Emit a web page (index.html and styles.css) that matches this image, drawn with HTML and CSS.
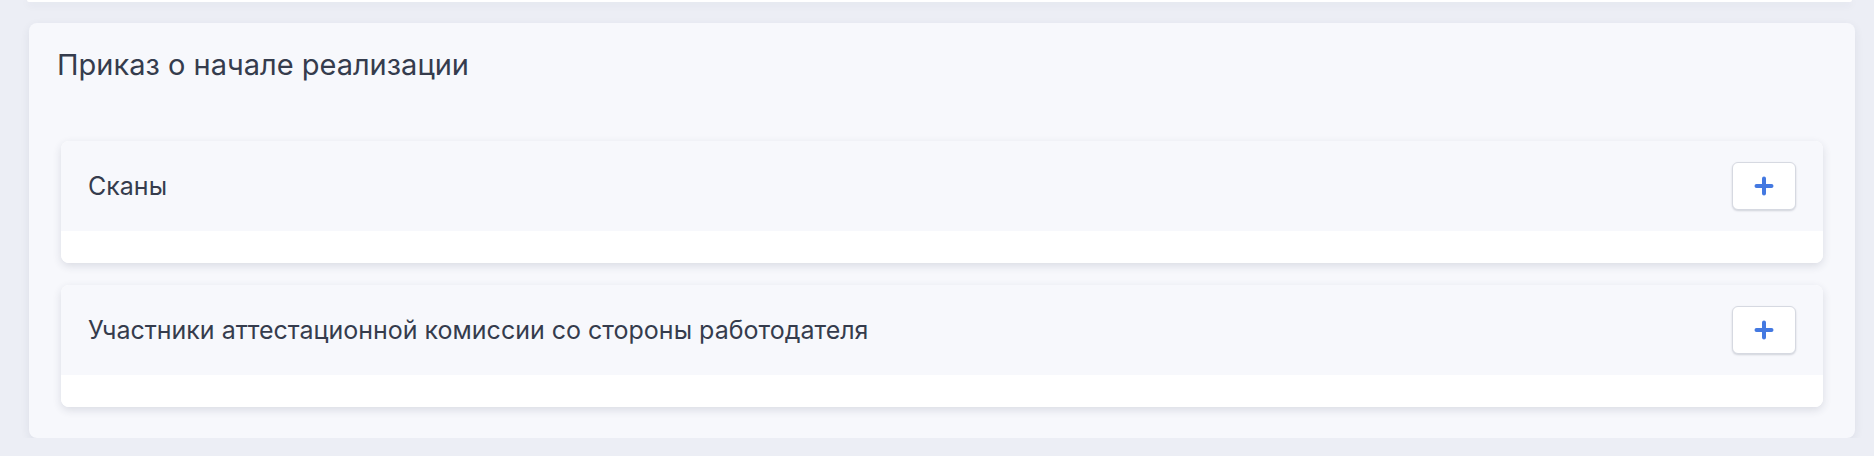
FILE: index.html
```html
<!DOCTYPE html>
<html lang="ru">
<head>
<meta charset="utf-8">
<title>Приказ о начале реализации</title>
<link rel="stylesheet" href="styles.css">
</head>
<body>
<div class="page">
  <div class="prev-card"></div>
  <section class="panel">
    <h2 class="panel-title">Приказ о начале реализации</h2>
    <div class="sections">
      <div class="sub-card">
        <div class="sub-head">
          <span class="sub-label">Сканы</span>
          <button class="add-btn" type="button" aria-label="Добавить">
            <svg width="20" height="20" viewBox="0 0 20 20"><path d="M10 2.5v15M2.5 10h15" stroke="#4479e1" stroke-width="4" stroke-linecap="round" fill="none"/></svg>
          </button>
        </div>
        <div class="sub-body"></div>
      </div>
      <div class="sub-card">
        <div class="sub-head">
          <span class="sub-label">Участники аттестационной комиссии со стороны работодателя</span>
          <button class="add-btn" type="button" aria-label="Добавить">
            <svg width="20" height="20" viewBox="0 0 20 20"><path d="M10 2.5v15M2.5 10h15" stroke="#4479e1" stroke-width="4" stroke-linecap="round" fill="none"/></svg>
          </button>
        </div>
        <div class="sub-body"></div>
      </div>
    </div>
  </section>
</div>
</body>
</html>
```
FILE: styles.css
```css
html, body {
  margin: 0;
  padding: 0;
  background: #eceef5;
  font-family: Inter, "Noto Sans", sans-serif;
  color: #353c4d;
}
.page {
  padding: 0 19px 0 29px;
}
.prev-card {
  height: 2px;
  margin: 0 3px 0 -2px;
  background: #ffffff;
  border-radius: 0 0 8px 8px;
  box-shadow: 0 2px 8px rgba(40, 50, 80, 0.12);
}
.panel {
  margin-top: 21px;
  background: #f7f8fc;
  border-radius: 8px;
  box-shadow: 0 3px 10px rgba(40, 50, 80, 0.08);
  padding: 25px 32px 31px;
}
.panel-title {
  margin: 0 0 59px -4px;
  font-size: 29px;
  line-height: 34px;
  font-weight: 400;
  color: #353c4d;
}
.sections {
  display: flex;
  flex-direction: column;
  gap: 22px;
}
.sub-card {
  background: #ffffff;
  border-radius: 8px;
  overflow: hidden;
  box-shadow: 0 3px 8px rgba(40, 50, 80, 0.14);
}
.sub-head {
  height: 90px;
  background: #f7f8fc;
  display: flex;
  align-items: center;
  justify-content: space-between;
  padding: 0 27px;
}
.sub-label {
  font-size: 25px;
  color: #353c4d;
}
.sub-body {
  height: 32px;
  background: #ffffff;
}
.add-btn {
  width: 64px;
  height: 48px;
  padding: 0;
  background: #ffffff;
  border: 1px solid #d6d9e1;
  border-radius: 6px;
  box-shadow: 0 1px 2px rgba(30, 40, 60, 0.18);
  display: flex;
  align-items: center;
  justify-content: center;
}
```
